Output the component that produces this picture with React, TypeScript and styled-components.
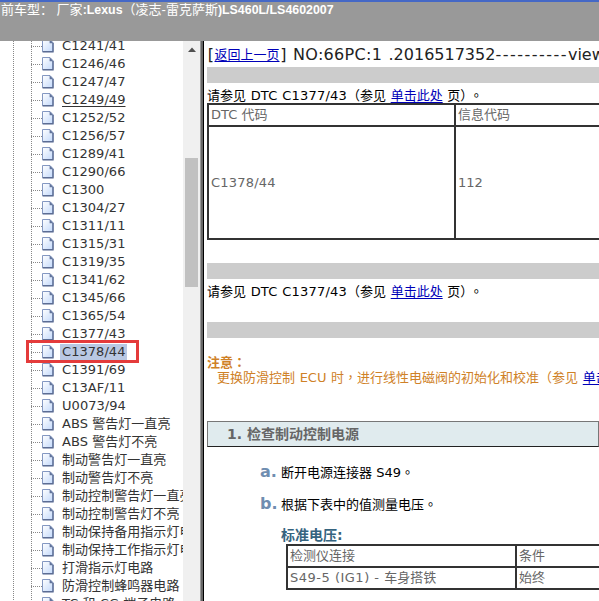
import { FunctionComponent, ReactNode } from 'react'
import styled, { createGlobalStyle } from 'styled-components'

const faultCodes = [
  'C1241/41',
  'C1246/46',
  'C1247/47',
  'C1249/49',
  'C1252/52',
  'C1256/57',
  'C1289/41',
  'C1290/66',
  'C1300',
  'C1304/27',
  'C1311/11',
  'C1315/31',
  'C1319/35',
  'C1341/62',
  'C1345/66',
  'C1365/54',
  'C1377/43',
  'C1378/44',
  'C1391/69',
  'C13AF/11',
  'U0073/94',
  'ABS 警告灯一直亮',
  'ABS 警告灯不亮',
  '制动警告灯一直亮',
  '制动警告灯不亮',
  '制动控制警告灯一直亮',
  '制动控制警告灯不亮',
  '制动保持备用指示灯电路',
  '制动保持工作指示灯电路',
  '打滑指示灯电路',
  '防滑控制蜂鸣器电路',
  'TC 和 CG 端子电路',
]

const hovered = 'C1249/49'
const selected = 'C1378/44'

const PageIcon: FunctionComponent = () => (
  <svg width="12" height="14" viewBox="0 0 12 14">
    <defs>
      <linearGradient id="sheet" x1="0" y1="0" x2="1" y2="1">
        <stop offset="0" stopColor="#ffffff" />
        <stop offset="1" stopColor="#c3d9fb" />
      </linearGradient>
    </defs>
    <path d="M0.5 0.5H8L11 3.6V12.6H0.5Z" fill="url(#sheet)" stroke="#8498c2" />
    <path d="M11 4V12.8H0.6" fill="none" stroke="#5c6d94" strokeWidth="1.4" />
    <path d="M7.6 0.2L11.4 4.2H7.6Z" fill="#62749b" />
  </svg>
)

const SeeAlso: FunctionComponent = () => (
  <Reference>
    请参见 <Latin>DTC C1377/43</Latin>（参见 <Link>单击此处</Link> 页）<Stop $gap={3}>。</Stop>
  </Reference>
)

const ListItem: FunctionComponent<{ marker: string; children: ReactNode }> = ({ marker, children }) => (
  <Step>
    <Marker>{marker}</Marker>
    <span>{children}</span>
  </Step>
)

export default function App() {
  return (
    <Window>
      <GlobalStyle />
      <TopBar>
        前车型： 厂家<b>:Lexus</b>（凌志-雷克萨斯<b>)LS460L/LS4602007</b>
      </TopBar>
      <Body>
        <Tree>
          <Guide />
          <Rows>
            {faultCodes.map(code => (
              <Row key={code}>
                <Branch />
                <PageIcon />
                <Label $hovered={code === hovered} $selected={code === selected}>{code}</Label>
                {code === selected && <Highlight />}
              </Row>
            ))}
          </Rows>
        </Tree>
        <Scrollbar>
          <svg width="8" height="5" viewBox="0 0 8 5">
            <path d="M0 5L4 0.5L8 5Z" fill="#505050" />
          </svg>
          <Thumb />
        </Scrollbar>
        <Divider />
        <Content>
          <Title>
            <Bracket>[</Bracket><Link>返回上一页</Link><Bracket>]</Bracket>
            <Page>NO:66PC:1</Page>
            <span>.2016517352</span>
            <Dashes>----------</Dashes>
            <span>view</span>
          </Title>
          <Bar />
          <SeeAlso />
          <Table $columns="247px 246px" $rows="22px 113px">
            <Cell>DTC 代码</Cell>
            <Cell>信息代码</Cell>
            <Cell><Latin>C1378/44</Latin></Cell>
            <Cell>112</Cell>
          </Table>
          <Bar $top={23} />
          <SeeAlso />
          <Bar $top={23} />
          <Notice>
            <strong>注意<Stop>：</Stop></strong>
            <p>更换防滑控制 ECU 时<Stop>，</Stop>进行线性电磁阀的初始化和校准（参见 <Link>单击此处</Link> 页）</p>
          </Notice>
          <Heading>1. 检查制动控制电源</Heading>
          <ListItem marker="a.">断开电源连接器 S49<Stop>。</Stop></ListItem>
          <ListItem marker="b.">根据下表中的值测量电压<Stop>。</Stop></ListItem>
          <Voltage>
            <Caption>标准电压:</Caption>
            <Table $columns="229px 200px" $rows="22px 22px">
              <Cell>检测仪连接</Cell>
              <Cell>条件</Cell>
              <Cell><Latin $wide>S49-5 (IG1) - </Latin>车身搭铁</Cell>
              <Cell>始终</Cell>
            </Table>
          </Voltage>
        </Content>
      </Body>
    </Window>
  )
}

const GlobalStyle = createGlobalStyle`
  body {
    margin: 0;
    overflow: hidden;
    background: #fff;
  }
`

const Window = styled.div`
  display: flex;
  flex-direction: column;
  width: 599px;
  height: 601px;
  overflow: hidden;
  font: 13px/18px 'DejaVu Sans', 'Noto Sans CJK SC', sans-serif;
  white-space: nowrap;
`

const TopBar = styled.header`
  flex: none;
  box-sizing: border-box;
  height: 41px;
  padding-left: 1px;
  border-top: 2px solid #4568c6;
  background: #999;
  color: #fff;
  font: 13px/16px 'Liberation Sans', 'Noto Sans CJK SC', sans-serif;

  b {
    font-size: 12.4px;
  }
`

const Body = styled.div`
  display: flex;
  flex: 1;
  min-height: 0;
`

const Tree = styled.nav`
  display: flex;
  flex: none;
  width: 183px;
  overflow: hidden;
  color: #333;
`

const Guide = styled.div`
  flex: none;
  width: 18px;
  margin-left: 13px;
  background: repeating-linear-gradient(#888 0 1px, transparent 1px 2px) left / 1px 100% no-repeat;
`

const Rows = styled.div`
  margin-top: -4px;
  background: repeating-linear-gradient(#888 0 1px, transparent 1px 2px) left / 1px 100% no-repeat;
`

const Row = styled.div`
  position: relative;
  display: flex;
  align-items: center;
  height: 18px;

  svg {
    flex: none;
  }
`

const Branch = styled.i`
  flex: none;
  width: 11px;
  height: 1px;
  background: repeating-linear-gradient(90deg, #888 0 1px, transparent 1px 2px);
`

const Label = styled.span<{ $hovered: boolean; $selected: boolean }>`
  margin-left: 6px;
  padding: 0 2px;
  line-height: 16px;
  letter-spacing: 0.05px;
  text-decoration: ${props => props.$hovered ? 'underline' : 'none'};
  text-underline-offset: 2px;
  background: ${props => props.$selected ? '#b9c8e3' : 'none'};
`

const Highlight = styled.div`
  position: absolute;
  top: -3px;
  left: -5px;
  box-sizing: border-box;
  width: 113px;
  height: 23px;
  border: 3px solid #e43b3b;
`

const Scrollbar = styled.div`
  display: flex;
  flex: none;
  flex-direction: column;
  align-items: center;
  width: 17px;
  padding-top: 6px;
  background: #f0f0f0;
`

const Thumb = styled.div`
  width: 13px;
  height: 129px;
  margin-top: 106px;
  background: #c1c1c1;
`

const Divider = styled.div`
  flex: none;
  box-sizing: border-box;
  width: 4px;
  border-left: 1px solid #999;
  border-right: 1px solid #000;
  background: #666;
`

const Content = styled.main`
  flex: 1;
  min-width: 0;
  padding-left: 3px;
  overflow: hidden;
  color: #000;
`

const Title = styled.div`
  display: flex;
  align-items: center;
  box-sizing: border-box;
  height: 26px;
  padding-top: 2px;
  color: #222;
  font-size: 16px;

  > * {
    flex: none;
  }
`

const Bracket = styled.span`
  width: 7.5px;
  text-align: center;
`

const Page = styled.span`
  width: 95.5px;
  margin-left: 6px;
  letter-spacing: 0.3px;
`

const Dashes = styled.span`
  letter-spacing: 1.48px;
`

const Link = styled.a`
  color: #0000b8;
  font-size: 13px;
  text-decoration: underline;
  text-underline-offset: 2px;
`

const Bar = styled.div<{ $top?: number }>`
  height: 16px;
  margin-top: ${props => props.$top || 0}px;
  background: #ccc;
`

const Reference = styled.div`
  height: 20px;
  line-height: 24px;
  word-spacing: 0.5px;
`

const Latin = styled.span<{ $wide?: boolean }>`
  letter-spacing: ${props => props.$wide ? 0.5 : 0.2}px;
`

// full-width punctuation that sits in the middle of its box
const Stop = styled.span<{ $gap?: number }>`
  margin-left: ${props => props.$gap || 0}px;
  font-family: 'Noto Sans CJK TC', sans-serif;
`

const Table = styled.div<{ $columns: string; $rows: string }>`
  display: grid;
  grid-template-columns: ${props => props.$columns};
  grid-template-rows: ${props => props.$rows};
  width: max-content;
  border: solid #333;
  border-width: 2px 0 0 2px;
  color: #666;
`

const Cell = styled.div`
  display: flex;
  align-items: center;
  box-sizing: border-box;
  padding-left: 2px;
  border: solid #333;
  border-width: 0 2px 2px 0;
  white-space: pre;
`

const Notice = styled.div`
  padding-top: 16px;
  color: #cf8127;
  line-height: 16px;

  strong {
    display: block;
    height: 15px;
  }

  p {
    height: 16px;
    margin: 0 0 0 10px;
    word-spacing: 0.5px;
  }
`

const Heading = styled.h3`
  box-sizing: border-box;
  height: 26px;
  margin: 36px 0 9px;
  padding-left: 19px;
  border: 1px solid #777;
  border-bottom-color: #222;
  background: #e0ebee;
  color: #666;
  font-size: 14px;
  font-weight: bold;
  line-height: 25px;
`

const Step = styled.div`
  display: flex;
  align-items: center;
  height: 32px;
  padding-left: 53px;
`

const Marker = styled.b`
  width: 21px;
  color: #6f8db0;
  font-size: 16px;
`

const Voltage = styled.div`
  padding: 6px 0 0 79px;
`

const Caption = styled.div`
  height: 18px;
  margin-left: -5px;
  color: #36647f;
  font-size: 14px;
  font-weight: bold;
`
